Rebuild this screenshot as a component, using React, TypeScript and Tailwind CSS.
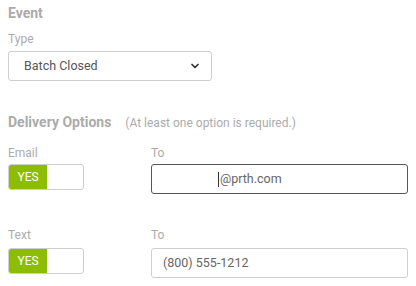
import { ChevronDown } from "lucide-react";

function Toggle() {
  return (
    <div className="flex h-[26px] w-[76px] overflow-hidden rounded-[3px] border border-[#cfcfcf] bg-white">
      <div className="flex w-[38px] items-center justify-center bg-[#8dbd00] text-[12px] text-white">
        YES
      </div>
    </div>
  );
}

export default function App() {
  return (
    <div className="h-[286px] w-[416px] bg-white px-2 pt-[4px] text-[#ababab]" style={{ fontFamily: "Roboto, sans-serif" }}>
      <div className="text-[14px] font-bold leading-[18px]">Event</div>
      <div className="mt-[9px] text-[12px] leading-[16px]">Type</div>
      <div className="mt-[4px] flex h-[30px] w-[204px] items-center justify-between rounded-[3px] border border-[#cfcfcf] pl-[15px] pr-[10px] text-[12.5px] text-[#555]">
        <span>Batch Closed</span>
        <ChevronDown size={12} strokeWidth={3.5} className="text-[#333]" />
      </div>

      <div className="mt-[31px] flex items-baseline">
        <span className="text-[14px] font-bold">Delivery Options</span>
        <span className="ml-[14px] text-[12px]">(At least one option is required.)</span>
      </div>

      <div className="mt-[12px] grid grid-cols-[143px_257px]">
        <div className="text-[12px] leading-[16px]">Email</div>
        <div className="text-[12px] leading-[16px]">To</div>
        <div className="mt-[3px]">
          <Toggle />
        </div>
        <div className="mt-[3px] flex h-[30px] items-center rounded-[3px] border border-[#555] pl-[66px] text-[12.5px] text-[#666]">
          <span className="mr-[1px] h-[15px] w-px bg-[#333]" />
          @prth.com
        </div>
      </div>

      <div className="mt-[33px] grid grid-cols-[143px_257px]">
        <div className="text-[12px] leading-[16px]">Text</div>
        <div className="text-[12px] leading-[16px]">To</div>
        <div className="mt-[5px]">
          <Toggle />
        </div>
        <div className="mt-[5px] flex h-[30px] items-center rounded-[3px] border border-[#cfcfcf] pl-[11px] text-[12.5px] text-[#666]">
          (800) 555-1212
        </div>
      </div>
    </div>
  );
}
